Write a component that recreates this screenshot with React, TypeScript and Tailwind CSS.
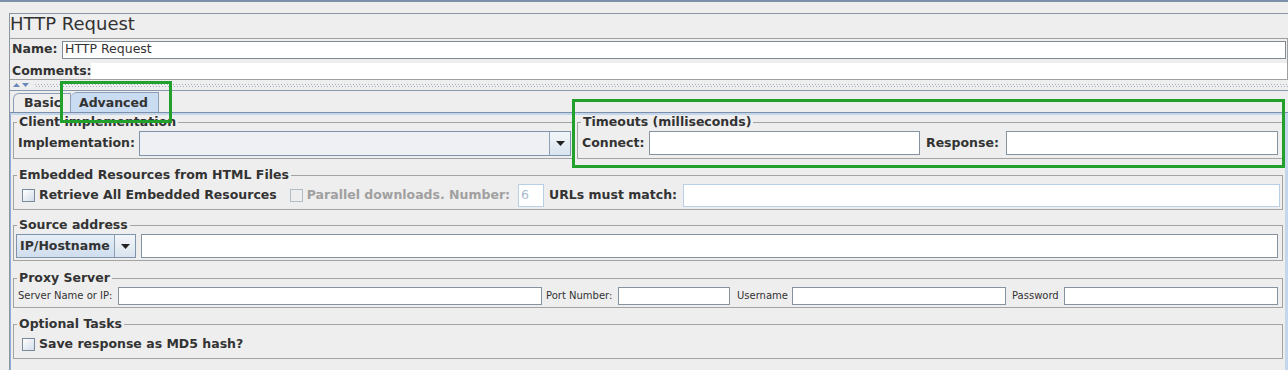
import React from "react";

function Field({ className = "" }: { className?: string }) {
  return <div className={"bg-white border border-[#8592a0] " + className} />;
}

function Check({ disabled = false }: { disabled?: boolean }) {
  return (
    <span
      className={
        disabled
          ? "block h-[13px] w-[13px] shrink-0 border border-[#b3bcc6] bg-[#eeeeee]"
          : "block h-[13px] w-[13px] shrink-0 border border-[#7a8a99] bg-linear-to-br from-white to-[#d3deea]"
      }
    />
  );
}

function Arrow() {
  return (
    <div className="flex h-full w-[21px] shrink-0 items-center justify-center border-l border-[#8da0b6] bg-linear-to-b from-[#f3f6f9] to-[#d9e4ef]">
      <svg width="9" height="5" viewBox="0 0 9 5">
        <path d="M0 0h9L4.5 5z" fill="#222" />
      </svg>
    </div>
  );
}

function Group({ title, className = "", children }: { title: string; className?: string; children: React.ReactNode }) {
  return (
    <fieldset className={"border border-[#a3a3a3] " + className}>
      <legend className="ml-[3px] px-[2px] text-[12.5px] font-bold leading-[14px]">{title}</legend>
      {children}
    </fieldset>
  );
}

export default function App() {
  return (
    <div className="relative h-[370px] w-[1288px] overflow-hidden bg-[#eeeeee] font-['DejaVu_Sans',sans-serif] text-[#333333]">
      <div className="h-[2px] bg-[#7d90aa]" />

      {/* title panel */}
      <div className="ml-[9px] mt-[11px] border-l border-t border-[#8a96a2]">
        <div className="h-[24px] text-[18px] leading-[20px]">HTTP Request</div>
        <div className="flex h-[42px] flex-col border-y border-r border-[#a0a0a0]">
          <div className="flex h-[20px] items-center pt-[1px]">
            <span className="w-[52px] shrink-0 pl-[2px] text-[12.5px] font-bold">Name:</span>
            <div className="mr-[1px] flex h-[18px] flex-1 items-center border border-[#7f8a95] bg-white pl-[2px] text-[12.5px]">
              HTTP Request
            </div>
          </div>
          <div className="mt-[3px] flex h-[17px] items-center pt-[1px]">
            <span className="w-[81px] shrink-0 pl-[2px] text-[12.5px] font-bold">Comments:</span>
            <div className="h-full flex-1 bg-white" />
          </div>
        </div>
      </div>

      {/* splitter */}
      <div className="ml-[9px] flex h-[10px] items-center border-l border-[#8a96a2]">
        <svg width="20" height="6" viewBox="0 0 20 6" className="ml-[3px] shrink-0">
          <path d="M0 5L3.5 1L7 5z" fill="#6a88bb" />
          <path d="M9 1h7L12.5 5z" fill="#6a88bb" />
        </svg>
        <div className="ml-[2px] flex h-[3px] flex-1 flex-col justify-between">
          <div className="h-[1px] bg-[repeating-linear-gradient(90deg,#a4afbd_0_1px,transparent_1px_3px)]" />
          <div className="h-[1px] bg-[repeating-linear-gradient(90deg,transparent_0_1px,#a4afbd_1px_2px,transparent_2px_3px)]" />
        </div>
      </div>
      <div className="ml-[9px] h-[1px] bg-[#8899ad]" />

      {/* tabs */}
      <div className="ml-[9px] flex h-[21px] items-end border-l border-[#8a96a2] pl-[3px]">
        <div className="flex h-[19px] w-[58px] items-center rounded-tl-[6px] border-l border-r border-t border-[#8d9fb6] pl-[10px] pt-[1px] text-[12.5px] font-bold">
          Basic
        </div>
        <div className="flex h-[20px] w-[88px] items-center rounded-tl-[6px] border-r border-t border-[#8d9fb6] bg-[#c9dcf1] pl-[8px] pt-[1px] text-[12.5px] font-bold">
          Advanced
        </div>
      </div>

      {/* tab panel */}
      <div className="ml-[9px] border-l border-[#8a96a2]">
        <div className="border-t border-[#7d8fa8]">
          <div className="h-[260px] border-l border-t-2 border-r-[3px] border-[#c3d6ec] border-l-[#8eaad6] pl-[2px] pr-[2px]">
            {/* row 1 */}
            <div className="flex">
              <Group title="Client implementation" className="h-[44px] w-[560px] shrink-0">
                <div className="flex h-[28px] items-center pl-[4px] pr-[1px]">
                  <span className="w-[121px] shrink-0 text-[12.5px] font-bold">Implementation:</span>
                  <div className="flex h-[25px] flex-1 border border-[#7f93aa] bg-[#eef0f3]">
                    <div className="flex-1" />
                    <Arrow />
                  </div>
                </div>
              </Group>
              <Group title="Timeouts (milliseconds)" className="ml-[4px] h-[44px] flex-1">
                <div className="flex h-[28px] items-center pl-[4px] pr-[4px]">
                  <span className="w-[67px] shrink-0 text-[12.5px] font-bold">Connect:</span>
                  <Field className="h-[24px] w-[271px] shrink-0" />
                  <span className="ml-[6px] w-[80px] shrink-0 text-[12.5px] font-bold">Response:</span>
                  <Field className="h-[24px] flex-1" />
                </div>
              </Group>
            </div>

            {/* embedded */}
            <Group title="Embedded Resources from HTML Files" className="mt-[9px] h-[42px]">
              <div className="flex h-[26px] items-center pl-[8px] pr-[2px] text-[12.5px] font-bold">
                <Check />
                <span className="ml-[4px] shrink-0">Retrieve All Embedded Resources</span>
                <span className="ml-[13px]">
                  <Check disabled />
                </span>
                <span className="ml-[4px] shrink-0 text-[#a0a0a0]">Parallel downloads. Number:</span>
                <div className="ml-[8px] flex h-[23px] w-[26px] shrink-0 items-center border border-[#b8cfe5] bg-white pl-[2px] font-normal text-[#aabbd0]">
                  6
                </div>
                <span className="ml-[5px] shrink-0">URLs must match:</span>
                <div className="ml-[6px] h-[23px] flex-1 border border-[#b8cfe5] bg-white" />
              </div>
            </Group>

            {/* source address */}
            <Group title="Source address" className="mt-[8px] h-[43px]">
              <div className="flex h-[28px] items-center pl-[2px] pr-[4px]">
                <div className="flex h-[24px] w-[120px] shrink-0 border border-[#7f93aa] bg-linear-to-b from-[#e6eef7] to-[#cfdded]">
                  <span className="flex flex-1 items-center pl-[3px] text-[12.5px] font-bold">IP/Hostname</span>
                  <Arrow />
                </div>
                <Field className="ml-[5px] h-[24px] flex-1" />
              </div>
            </Group>

            {/* proxy */}
            <Group title="Proxy Server" className="mt-[10px] h-[37px]">
              <div className="flex h-[21px] items-center pl-[4px] pr-[4px] text-[10px]">
                <span className="w-[100px] shrink-0">Server Name or IP:</span>
                <Field className="h-[18px] w-[424px] shrink-0" />
                <span className="ml-[4px] w-[72px] shrink-0">Port Number:</span>
                <Field className="h-[18px] w-[112px] shrink-0" />
                <span className="ml-[7px] w-[55px] shrink-0">Username</span>
                <Field className="h-[18px] w-[214px] shrink-0" />
                <span className="ml-[6px] w-[52px] shrink-0">Password</span>
                <Field className="h-[18px] flex-1" />
              </div>
            </Group>

            {/* optional */}
            <Group title="Optional Tasks" className="mt-[9px] h-[42px]">
              <div className="mt-[3px] flex h-[20px] items-center pl-[8px] text-[12.5px] font-bold">
                <Check />
                <span className="ml-[4px]">Save response as MD5 hash?</span>
              </div>
            </Group>
          </div>
        </div>
      </div>

      {/* annotation boxes */}
      <div className="absolute left-[60px] top-[81px] h-[42px] w-[112px] border-[3px] border-[#21a12b]" />
      <div className="absolute left-[572px] top-[99px] h-[69px] w-[713px] border-[3px] border-[#21a12b]" />
    </div>
  );
}
